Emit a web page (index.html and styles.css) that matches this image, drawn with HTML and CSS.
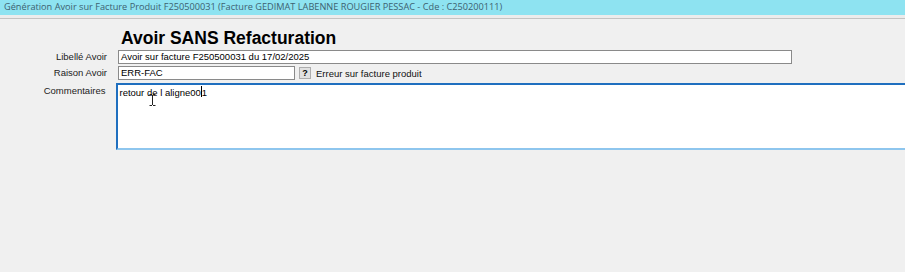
FILE: index.html
```html
<!DOCTYPE html>
<html lang="fr">
<head>
<meta charset="utf-8">
<title>Génération Avoir</title>
<link rel="stylesheet" href="styles.css">
</head>
<body>
<div class="titlebar">Génération Avoir sur Facture Produit F250500031 (Facture GEDIMAT LABENNE ROUGIER PESSAC - Cde : C250200111)</div>
<div class="sep"></div>
<main class="form">
  <h1 class="heading">Avoir SANS Refacturation</h1>
  <div class="row">
    <label class="label">Libellé Avoir</label>
    <div class="input wide">Avoir sur facture F250500031 du 17/02/2025</div>
  </div>
  <div class="row">
    <label class="label">Raison Avoir</label>
    <div class="input short">ERR-FAC</div>
    <div class="qbtn">?</div>
    <span class="desc">Erreur sur facture produit</span>
  </div>
  <div class="row top">
    <label class="label">Commentaires</label>
    <div class="textarea">retour de l aligne00<span class="caret"></span>1<svg class="ibeam" width="7" height="12" viewBox="0 0 7 12"><path d="M0.5 0.5h2.5M4 0.5h2.5M3.5 1v10M0.5 11.5h2.5M4 11.5h2.5" stroke="#222" stroke-width="1" fill="none"/></svg></div>
  </div>
</main>
</body>
</html>
```
FILE: styles.css
```css
html, body {
  margin: 0;
  padding: 0;
  background: #f0f0f0;
  width: 905px;
  height: 272px;
  overflow: hidden;
  font-family: "Liberation Sans", Arial, sans-serif;
}
.titlebar {
  height: 15px;
  background: #8ee3f1;
  color: #3d6170;
  font-family: "Open Sans", sans-serif;
  font-size: 9.2px;
  line-height: 14px;
  padding-left: 4px;
  white-space: nowrap;
}
.sep {
  height: 3px;
  background: #ececec;
  border-bottom: 1px solid #c3c3c3;
}
.form {
  display: flex;
  flex-direction: column;
  gap: 2px;
}
.heading {
  margin: 9px 0 0 121px;
  font-size: 17.5px;
  line-height: 20px;
  font-weight: bold;
  color: #000;
}
.row {
  display: flex;
  align-items: center;
  height: 14px;
}
.row.top {
  align-items: flex-start;
  height: auto;
  margin-top: 1px;
}
.label {
  width: 107px;
  text-align: right;
  font-size: 9.5px;
  color: #222;
  margin-right: 11px;
  line-height: 14px;
}
.row.top .label { line-height: 16px; }
.input {
  box-sizing: border-box;
  height: 14px;
  background: #fff;
  border: 1px solid #8a8a8a;
  font-size: 9.5px;
  line-height: 12px;
  padding-left: 2px;
  color: #000;
  white-space: nowrap;
}
.wide { width: 674px; }
.short { width: 177px; }
.qbtn {
  box-sizing: border-box;
  width: 12px;
  height: 12px;
  margin-left: 4px;
  border: 1px solid #adadad;
  background: #e1e1e1;
  font-size: 9px;
  font-weight: bold;
  line-height: 10px;
  text-align: center;
  color: #000;
}
.desc {
  margin-left: 5px;
  font-size: 9.5px;
  color: #111;
}
.textarea {
  position: relative;
  box-sizing: border-box;
  width: 800px;
  height: 67px;
  background: #fff;
  border-top: 2px solid #1f6fbf;
  border-left: 2px solid #1f6fbf;
  border-bottom: 2px solid #8ec6ee;
  font-size: 9.5px;
  line-height: 14px;
  padding: 1px 0 0 1px;
  color: #000;
}
.caret {
  display: inline-block;
  width: 1px;
  height: 11px;
  background: #000;
  vertical-align: -1px;
}
.ibeam {
  position: absolute;
  left: 31px;
  top: 9px;
}
```
